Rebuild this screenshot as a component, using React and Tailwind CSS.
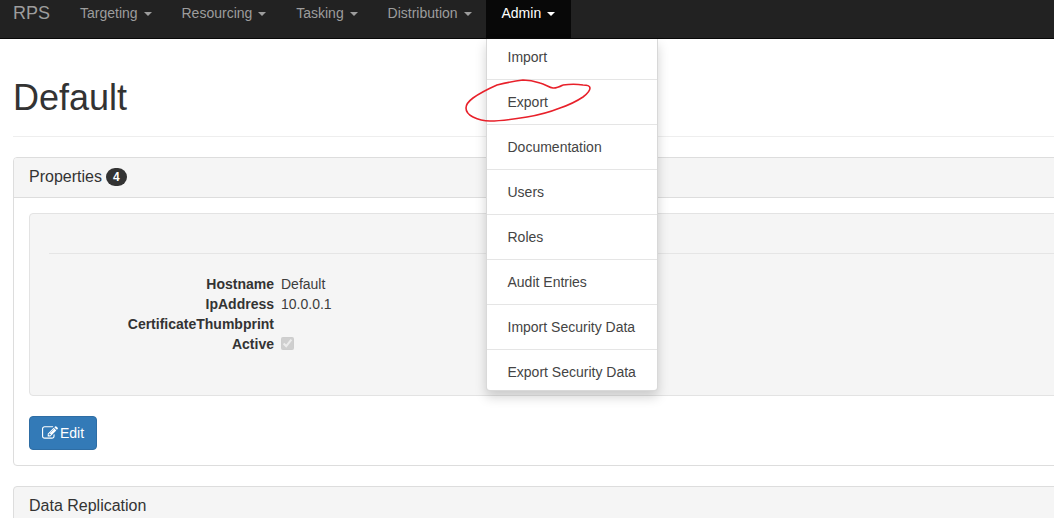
import React from "react";

const Caret = () => (
  <span className="inline-block w-0 h-0 ml-[2px] align-middle border-t-[4px] border-x-[4px] border-x-transparent border-t-current" />
);

const NavItem = ({ label, active, children }) => (
  <li className={`relative ${active ? "-ml-[1px]" : ""}`}>
    <a className={`block pt-[3px] pb-[15px] leading-[20px] text-[14px] ${active ? "w-[85px] pl-[16px] bg-[#080808] text-white" : "px-[15px] text-[#9d9d9d]"}`}>
      {label} <Caret />
    </a>
    {children}
  </li>
);

const items = ["Import", "Export", "Documentation", "Users", "Roles", "Audit Entries", "Import Security Data", "Export Security Data"];

const Row = ({ label, children }) => (
  <>
    <div className="text-right font-bold text-[#333]">{label}</div>
    <div className="text-[#3d3d3d] flex items-center h-[20px]">{children}</div>
  </>
);

export default function App() {
  return (
    <div className="relative w-[1054px] h-[518px] overflow-hidden bg-white text-[14px] leading-[20px] text-[#333] font-['Liberation_Sans',Arial,sans-serif]">
      <nav className="relative z-10 h-[39px] bg-[#222222] border-b border-[#080808] flex pl-[13px]">
        <a className="block pr-[15px] pt-[3px] text-[18px] leading-[20px] text-[#9d9d9d]">RPS</a>
        <ul className="flex">
          <NavItem label="Targeting" />
          <NavItem label="Resourcing" />
          <NavItem label="Tasking" />
          <NavItem label="Distribution" />
          <NavItem label="Admin" active>
            <ul className="absolute left-0 top-[39px] w-[172px] bg-white border border-[rgba(0,0,0,0.15)] border-t-0 rounded-b-[4px] shadow-[0_6px_12px_rgba(0,0,0,0.175)]">
              {items.map((t, i) => (
                <li
                  key={t}
                  className={`pl-[21px] whitespace-nowrap text-[#444] leading-[20px] ${i === 0 ? "pt-[8px] pb-[12px]" : i === items.length - 1 ? "pt-[12px] pb-[8px]" : "py-[12px]"} ${i < items.length - 1 ? "border-b border-[#e5e5e5]" : ""}`}
                >
                  {t}
                </li>
              ))}
            </ul>
          </NavItem>
        </ul>
      </nav>

      <main className="w-[1120px] px-[13px]">
        <div className="pt-[39px] pb-[9px] border-b border-[#eeeeee] mb-[20px]">
          <h1 className="text-[36px] leading-[39.6px] mb-[9px] font-normal text-[#333]">Default</h1>
        </div>

        <section className="border border-[#dddddd] rounded-[4px] mb-[20px] bg-white">
          <div className="h-[40px] px-[15px] flex items-center bg-[#f5f5f5] border-b border-[#dddddd] rounded-t-[3px]">
            <span className="text-[16px]">Properties</span>
            <span className="ml-[4px] inline-block min-w-[21px] px-[7px] h-[18px] leading-[18px] rounded-[10px] bg-[#333] text-white text-[12px] font-bold text-center">4</span>
          </div>
          <div className="p-[15px]">
            <div className="bg-[#f5f5f5] border border-[#e3e3e3] rounded-[4px] p-[19px]">
              <div className="h-[21px] border-b border-[#e5e5e5] mb-[20px]" />
              <div className="grid grid-cols-[225px_1fr] gap-x-[7px] mb-[22px]">
                <Row label="Hostname">Default</Row>
                <Row label="IpAddress">10.0.0.1</Row>
                <Row label="CertificateThumbprint" />
                <Row label="Active">
                  <input type="checkbox" checked disabled readOnly className="w-[13px] h-[13px] m-0" />
                </Row>
              </div>
            </div>
            <button className="mt-[20px] h-[34px] w-[68px] flex items-center justify-center gap-[2px] bg-[#337ab7] border border-[#2e6da4] rounded-[4px] text-white text-[14px]">
              <svg viewBox="0 0 1792 1792" width="16" height="16" fill="currentColor">
                <path d="M888 1184l116-116-152-152-116 116v56h96v96h56zm440-720q-16-16-33 1l-350 350q-17 17-1 33t33-1l350-350q17-17 1-33zm80 594v190q0 119-84.5 203.5t-203.5 84.5h-832q-119 0-203.5-84.5t-84.5-203.5v-832q0-119 84.5-203.5t203.5-84.5h832q63 0 117 25 15 7 18 23 3 17-9 29l-49 49q-14 14-32 8-23-6-45-6h-832q-66 0-113 47t-47 113v832q0 66 47 113t113 47h832q66 0 113-47t47-113v-126q0-13 9-22l64-64q15-15 35-7t20 29zm-96-738l288 288-672 672h-288v-288zm444 132l-92 92-288-288 92-92q28-28 68-28t68 28l152 152q28 28 28 68t-28 68z" />
              </svg>
              <span>Edit</span>
            </button>
          </div>
        </section>

        <section className="border border-[#dddddd] rounded-[4px] bg-[#f5f5f5] h-[60px] px-[15px] pt-[9px]">
          <span className="text-[16px]">Data Replication</span>
        </section>
      </main>

      <svg className="absolute left-0 top-0 z-20 pointer-events-none" width="1054" height="518" fill="none">
        <path
          d="M563 85 C559 87 556 88.5 553 88 C549 87.5 545 84 540 83 C534 81 529 80 523 80 C514 81 505 83 497 85 C488 89 480 93 473 98 C469 101 466 104 466 108 C466 112 469 115 473 117 C479 120 484 121 490 121 C503 121 515 119 527 117 C539 115 550 112 560 108 C569 105 577 101 583 97 C587 94 590 91 590 88 C590 86 587 85 583 85 C577 84 570 84 563 85"
          stroke="#e8202a"
          strokeWidth="1.6"
        />
      </svg>
    </div>
  );
}
